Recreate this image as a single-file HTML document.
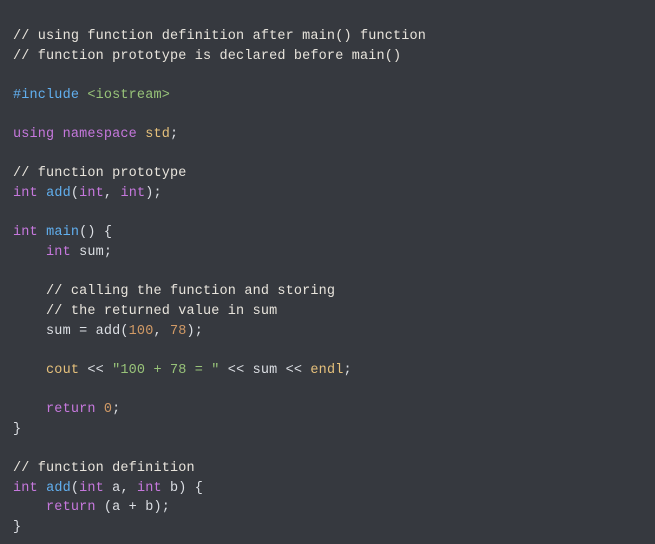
<!DOCTYPE html>
<html><head><meta charset="utf-8"><style>
html,body{margin:0;padding:0;}
body{width:655px;height:544px;background:#36393f;overflow:hidden;}
pre{margin:0;padding:27px 0 0 13px;font-family:"Liberation Mono",monospace;font-size:13.5px;letter-spacing:0.16px;line-height:19.64px;color:#dcdfe4;white-space:pre;}
.c{color:#e8e4dc}
.k{color:#c678dd}
.b{color:#61afef}
.g{color:#98c379}
.o{color:#d19a66}
.y{color:#e5c07b}
</style></head><body><pre><span class="c">// using function definition after main() function</span>
<span class="c">// function prototype is declared before main()</span>

<span class="b">#include</span> <span class="g">&lt;iostream&gt;</span>

<span class="k">using</span> <span class="k">namespace</span> <span class="y">std</span>;

<span class="c">// function prototype</span>
<span class="k">int</span> <span class="b">add</span>(<span class="k">int</span>, <span class="k">int</span>);

<span class="k">int</span> <span class="b">main</span>() {
    <span class="k">int</span> sum;

    <span class="c">// calling the function and storing</span>
    <span class="c">// the returned value in sum</span>
    sum = add(<span class="o">100</span>, <span class="o">78</span>);

    <span class="y">cout</span> &lt;&lt; <span class="g">"100 + 78 = "</span> &lt;&lt; sum &lt;&lt; <span class="y">endl</span>;

    <span class="k">return</span> <span class="o">0</span>;
}

<span class="c">// function definition</span>
<span class="k">int</span> <span class="b">add</span>(<span class="k">int</span> a, <span class="k">int</span> b) {
    <span class="k">return</span> (a + b);
}
</pre></body></html>
